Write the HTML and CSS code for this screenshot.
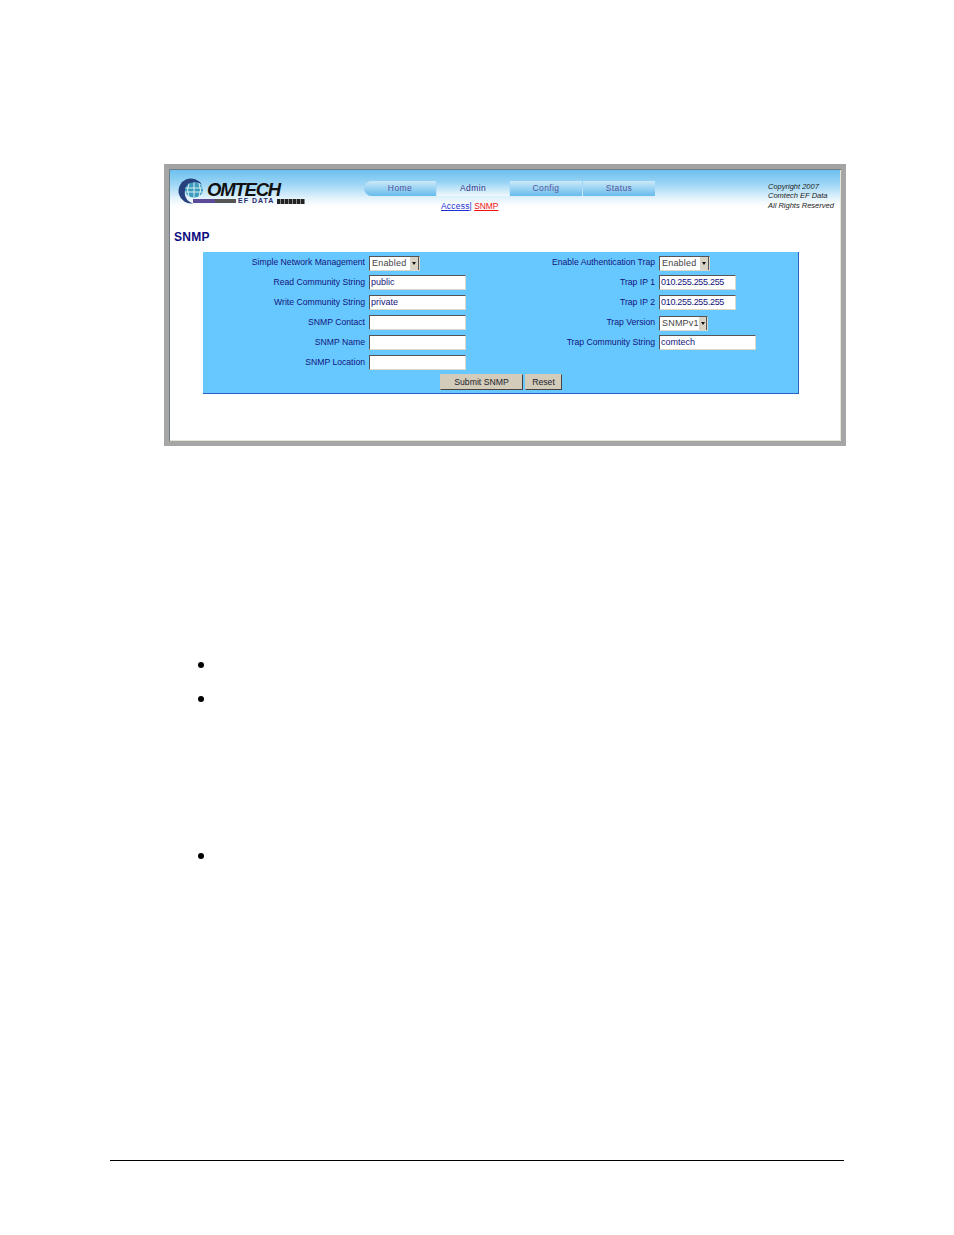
FILE: index.html
```html
<!DOCTYPE html>
<html lang="en">
<head>
    <meta charset="UTF-8">
    <title>SNMP</title>
    <link rel="stylesheet" href="styles.css">
</head>
<body>
    <div class="shot">
        <div class="banner">
            <div class="logo">
                <svg class="logo-c" width="60" height="28" viewBox="0 0 60 28">
                    <path d="M24 7 A12.5 12.5 0 1 0 15 25.3 A10.5 10.5 0 1 1 24 7 Z" fill="#27407e"/>
                    <rect x="15" y="21" width="22" height="4" fill="#5b4a98"/>
                    <rect x="37" y="21" width="21" height="4" fill="#555"/>
                    <ellipse cx="16" cy="12" rx="9" ry="7.5" fill="#3d9cbc"/>
                    <path d="M7.5 10 H24.5 M7.5 14 H24.5 M16 4.5 V19.5 M11 5.5 Q8 12 11 18.5 M21 5.5 Q24 12 21 18.5" stroke="#d8eff6" stroke-width="1" fill="none"/>
                </svg>
                <span class="logo-name">OMTECH</span>
                <div class="logo-sub"><span>EF DATA</span><span class="logo-ticks"></span></div>
            </div>
            <div class="nav-area">
                <div class="tabs">
                    <div class="tab tab-first">Home</div>
                    <div class="tab tab-on">Admin</div>
                    <div class="tab">Config</div>
                    <div class="tab">Status</div>
                </div>
                <div class="subnav"><a class="link-blue">Access</a><span class="sep">|</span> <a class="link-red">SNMP</a></div>
            </div>
            <div class="copyright">Copyright 2007<br>Comtech EF Data<br>All Rights Reserved</div>
        </div>

        <h2 class="title">SNMP</h2>

        <form class="panel">
            <div class="columns">
                <div class="col col-left">
                    <div class="row"><label>Simple Network Management</label><div class="select"><span>Enabled</span><b class="arrow"></b></div></div>
                    <div class="row"><label>Read Community String</label><input type="text" class="w97" value="public"></div>
                    <div class="row"><label>Write Community String</label><input type="text" class="w97" value="private"></div>
                    <div class="row"><label>SNMP Contact</label><input type="text" class="w97"></div>
                    <div class="row"><label>SNMP Name</label><input type="text" class="w97"></div>
                    <div class="row"><label>SNMP Location</label><input type="text" class="w97"></div>
                </div>
                <div class="col col-right">
                    <div class="row"><label>Enable Authentication Trap</label><div class="select"><span>Enabled</span><b class="arrow"></b></div></div>
                    <div class="row"><label>Trap IP 1</label><input type="text" class="w77" value="010.255.255.255"></div>
                    <div class="row"><label>Trap IP 2</label><input type="text" class="w77" value="010.255.255.255"></div>
                    <div class="row"><label>Trap Version</label><div class="select select-sm"><span>SNMPv1</span><b class="arrow"></b></div></div>
                    <div class="row"><label>Trap Community String</label><input type="text" class="w97" value="comtech"></div>
                </div>
            </div>
            <div class="buttons">
                <button type="button" class="btn btn-submit">Submit SNMP</button>
                <button type="button" class="btn btn-reset">Reset</button>
            </div>
        </form>
    </div>

    <ul class="list list-a">
        <li></li>
        <li></li>
    </ul>
    <ul class="list list-b">
        <li></li>
    </ul>

    <div class="footer-line"></div>
</body>
</html>
```

FILE: styles.css
```css
html, body {
    margin: 0;
    padding: 0;
    background-color: #fff;
}
body {
    width: 954px;
    height: 1235px;
    overflow: hidden;
    padding-top: 164px;
    box-sizing: border-box;
    font-family: "Liberation Sans", Arial, sans-serif;
}
.shot {
    width: 682px;
    height: 282px;
    margin-left: 164px;
    box-sizing: border-box;
    border: 5px solid #a6a6a6;
    border-top-color: #a3a3a3;
    background-color: #fff;
    position: relative;
    box-shadow: inset 1px 1px 0 #6f7f86, inset -1px -1px 0 #e8e4d8;
}

/* banner */
.banner {
    height: 48px;
    display: flex;
    background: linear-gradient(to bottom, #6cc0ef 0%, #a2d8f6 32%, #e6f4fc 60%, #fff 76%);
    margin: 1px 1px 0 1px;
}
.logo {
    width: 194px;
    flex: none;
    position: relative;
    height: 48px;
}
.logo-c {
    position: absolute;
    left: 8px;
    top: 8px;
}
.logo-name {
    position: absolute;
    left: 37px;
    top: 12px;
    font-size: 18.5px;
    line-height: 16px;
    font-weight: bold;
    font-style: italic;
    letter-spacing: -1.2px;
    color: #111;
}
.logo-sub {
    position: absolute;
    left: 68px;
    top: 28px;
    display: flex;
    align-items: center;
    gap: 3px;
    font-size: 7px;
    line-height: 6px;
    font-weight: bold;
    letter-spacing: 1px;
    color: #2b2b6c;
}
.logo-ticks {
    width: 28px;
    height: 5px;
    background: repeating-linear-gradient(to right, #222 0, #222 3px, #888 3px, #888 4px);
}
.nav-area {
    width: 300px;
    flex: none;
}
.tabs {
    display: flex;
    gap: 1px;
    margin-top: 11px;
}
.tab {
    width: 72px;
    height: 15px;
    line-height: 15px;
    font-size: 8.5px;
    font-weight: normal;
    letter-spacing: 0.4px;
    text-align: center;
    color: #55559f;
    background: linear-gradient(to bottom, #cbe9f9, #68bcec);
}
.tab-first {
    border-radius: 8px 0 0 8px;
}
.tab-on {
    background: linear-gradient(to bottom, #8fd0f4, #f2f9fd);
    color: #333388;
}
.subnav {
    margin: 5px 0 0 77px;
    font-size: 8.5px;
    line-height: 11px;
}
.link-blue {
    color: #2030d0;
    text-decoration: underline;
    letter-spacing: 0.2px;
}
.link-red {
    color: #f01010;
    text-decoration: underline;
    letter-spacing: -0.1px;
}
.sep {
    color: #2030d0;
}
.copyright {
    margin: 12px 0 0 104px;
    font-size: 7.5px;
    line-height: 9.3px;
    font-style: italic;
    color: #222;
    white-space: nowrap;
}

.title {
    margin: 11px 0 0 5px;
    height: 16px;
    font-size: 12px;
    line-height: 16px;
    font-weight: bold;
    letter-spacing: 0.3px;
    color: #0b0b80;
}

/* form panel */
.panel {
    width: 596px;
    height: 142px;
    margin: 7px 0 0 34px;
    box-sizing: border-box;
    background-color: #66c8ff;
    border-right: 1px solid #2a63c8;
    border-bottom: 1px solid #2a63c8;
    font-size: 8.65px;
    color: #14147c;
}
.columns {
    display: flex;
}
.col {
    flex: none;
}
.col-left {
    width: 291px;
}
.col-right {
    width: 304px;
}
.row {
    display: flex;
    align-items: center;
    height: 20px;
}
.row label {
    flex: none;
    text-align: right;
    margin-right: 4px;
    white-space: nowrap;
}
.col-left .row label {
    width: 162px;
}
.col-right .row label {
    width: 161px;
}
.row input {
    height: 15px;
    box-sizing: border-box;
    margin: 0;
    padding: 0 1px;
    background-color: #fff;
    border: 1px solid #dcd8cc;
    border-top: 1px solid #555;
    border-left: 1px solid #555;
    font-family: "Liberation Sans", Arial, sans-serif;
    font-size: 9px;
    color: #14147c;
}
.w97 {
    width: 97px;
}
.w77 {
    width: 77px;
    letter-spacing: -0.3px;
}
.select {
    width: 51px;
    height: 15px;
    margin-top: 2px;
    box-sizing: border-box;
    display: flex;
    align-items: center;
    justify-content: space-between;
    background-color: #fff;
    border: 1px solid #dcd8cc;
    border-top: 1px solid #555;
    border-left: 1px solid #555;
    padding-left: 2px;
    font-size: 9px;
    color: #444;
    letter-spacing: 0.2px;
}
.select-sm {
    width: 49px;
}
.arrow {
    width: 9px;
    height: 13px;
    background-color: #d8d3c4;
    position: relative;
    border-right: 1px solid #555;
    box-sizing: border-box;
}
.arrow::after {
    content: "";
    position: absolute;
    left: 2px;
    top: 5px;
    border: 2px solid transparent;
    border-top: 3px solid #111;
    border-bottom: 0;
}
.buttons {
    display: flex;
    gap: 2px;
    margin: 2px 0 0 237px;
}
.btn {
    height: 16px;
    margin: 0;
    padding: 0;
    font-family: "Liberation Sans", Arial, sans-serif;
    font-size: 8.7px;
    color: #1c1c2c;
    background-color: #d4ccba;
    border: 1px solid #d4ccba;
    border-right-color: #444;
    border-bottom-color: #444;
}
.btn-submit {
    width: 83px;
}
.btn-reset {
    width: 37px;
}

/* bullets from the page below */
.list {
    list-style: none;
    margin: 0 0 0 198px;
    padding: 0;
}
.list li {
    width: 6px;
    height: 6px;
    border-radius: 50%;
    background-color: #000;
}
.list-a {
    margin-top: 216px;
}
.list-a li + li {
    margin-top: 28px;
}
.list-b {
    margin-top: 151px;
}

.footer-line {
    height: 1px;
    width: 734px;
    margin: 301px 0 0 110px;
    background-color: #000;
}
```
